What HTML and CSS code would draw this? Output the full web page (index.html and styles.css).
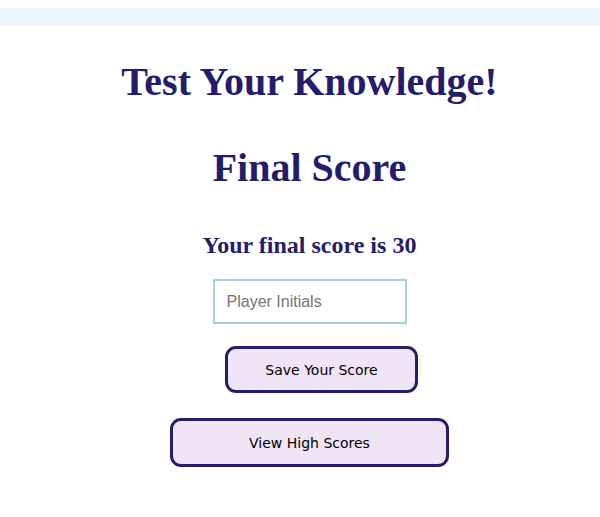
FILE: index.html
```html
<!DOCTYPE html>
<html>
<head>
<meta charset="utf-8">
<link rel="stylesheet" href="styles.css">
</head>
<body>
<header class="topbar"></header>
<main class="quiz">
  <h1 class="title">Test Your Knowledge!</h1>
  <h1 class="title">Final Score</h1>
  <h2 class="score">Your final score is 30</h2>
  <input class="initials" type="text" placeholder="Player Initials">
  <button class="btn btn-save">Save Your Score</button>
  <button class="btn btn-view">View High Scores</button>
</main>
</body>
</html>
```
FILE: styles.css
```css
html, body {
  margin: 0;
  padding: 0;
  background: #ffffff;
}
body {
  padding-top: 8px;
  font-family: "Liberation Serif", serif;
}
.topbar {
  height: 18px;
  background: #ecf6fe;
}
.quiz {
  display: flex;
  flex-direction: column;
  align-items: center;
  padding-left: 19px;
}
.title {
  margin: 0;
  font-family: "Liberation Serif", serif;
  font-weight: bold;
  font-size: 40px;
  color: #251d6b;
  line-height: 46px;
}
.title:first-child {
  margin-top: 33px;
}
.title + .title {
  margin-top: 40px;
}
.score {
  margin: 40px 0 0;
  font-family: "Liberation Serif", serif;
  font-weight: bold;
  font-size: 24px;
  line-height: 28px;
  color: #251d6b;
}
.initials {
  margin-top: 20px;
  width: 194px;
  height: 45px;
  box-sizing: border-box;
  border: 2px solid #a0d2e0;
  padding: 0 12px;
  font-family: "Liberation Sans", sans-serif;
  font-size: 16px;
  color: #333;
  outline: none;
}
.initials::placeholder {
  color: #757575;
}
.btn {
  box-sizing: border-box;
  border: 3px solid #261d6b;
  border-radius: 11px;
  background: #f0e4f7;
  font-family: "DejaVu Sans", sans-serif;
  font-size: 14px;
  color: #000;
  padding: 0;
}
.btn-save {
  margin-top: 22px;
  width: 193px;
  height: 47px;
  margin-left: 24px;
}
.btn-view {
  margin-top: 25px;
  width: 279px;
  height: 49px;
}
```
